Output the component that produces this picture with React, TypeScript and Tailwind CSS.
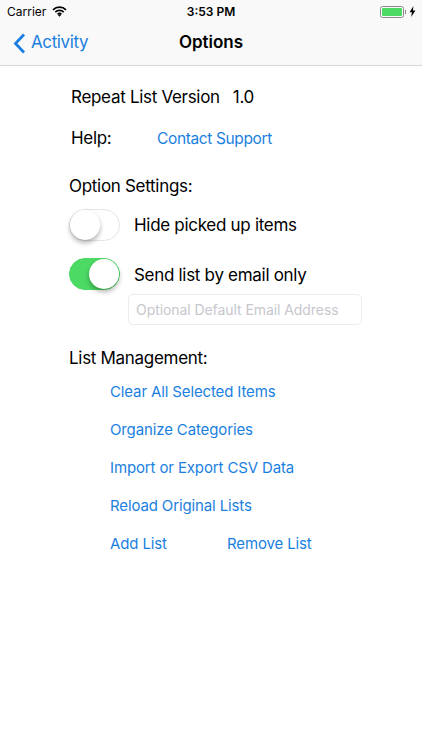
const blue = "text-[#1a7fe0]";

function Toggle({ on }: { on: boolean }) {
  return (
    <div
      className={`flex h-[32px] w-[51px] shrink-0 items-center rounded-full border ${
        on ? "justify-end border-[#4cd964] bg-[#4cd964]" : "justify-start border-[#e5e5e5] bg-white"
      }`}
    >
      <div className="h-[30px] w-[30px] rounded-full bg-white shadow-[0_3px_5px_rgba(0,0,0,0.3)]" />
    </div>
  );
}

function StatusBar() {
  return (
    <div className="relative flex h-[21px] items-center justify-between pl-[7px] pr-[6px] pt-[2px] text-[12px] text-black">
      <div className="flex items-center gap-[6px]">
        <span>Carrier</span>
        <svg width="15" height="11" viewBox="0 0 15 11" fill="none" stroke="#000" strokeWidth="1.7">
          <path d="M1 3.8a9.2 9.2 0 0 1 13 0" />
          <path d="M3.3 6.1a6 6 0 0 1 8.4 0" />
          <path d="M5.6 8.3a2.8 2.8 0 0 1 3.8 0" />
          <path d="M7.5 10.8 5.9 9.1a2.3 2.3 0 0 1 3.2 0z" fill="#000" stroke="none" />
        </svg>
      </div>
      <span className="absolute left-0 right-0 text-center font-semibold">3:53 PM</span>
      <div className="flex items-center gap-[3px]">
        <div className="flex items-center">
          <div className="h-[12px] w-[24px] rounded-[2.5px] border border-[#8a8a8a] p-[1px]">
            <div className="h-full w-full rounded-[1px] bg-[#4cd964]" />
          </div>
          <div className="ml-[1px] h-[4px] w-[1px] bg-[#8a8a8a]" />
        </div>
        <svg width="7" height="11" viewBox="0 0 7 11" fill="#000">
          <path d="M4.4 0 0.6 6.2h2.3L2.2 11 6.4 4.4H3.9z" />
        </svg>
      </div>
    </div>
  );
}

function NavBar() {
  return (
    <div className="relative flex h-[45px] items-center border-b border-[#d9d9d9] bg-[#f9f9f9]">
      <div className={`flex items-center gap-[5px] pl-[13px] text-[17px] tracking-[-0.4px] ${blue}`}>
        <svg width="13" height="21" viewBox="0 0 13 21" fill="none" stroke="#1a7fe0" strokeWidth="2.8">
          <path d="M11 1.5 2.5 10.5l8.5 9" />
        </svg>
        <span>Activity</span>
      </div>
      <div className="absolute left-0 right-0 text-center text-[17px] font-semibold text-black">Options</div>
    </div>
  );
}

export default function App() {
  return (
    <div
      className="h-[750px] w-[422px] overflow-hidden bg-white text-black"
      style={{ fontFamily: "Inter, 'Liberation Sans', sans-serif" }}
    >
      <div className="bg-[#f9f9f9]">
        <StatusBar />
        <NavBar />
      </div>

      <div className="flex flex-col pl-[69px] pt-[21px] text-[17px] tracking-[-0.3px]">
        <div className="ml-[2px] flex h-[22px] items-center gap-[13px]">
          <span>Repeat List Version</span>
          <span>1.0</span>
        </div>
        <div className="ml-[2px] mt-[19px] flex h-[22px] items-center">
          <span className="w-[86px]">Help:</span>
          <span className={`text-[15.5px] tracking-[-0.37px] ${blue}`}>Contact Support</span>
        </div>

        <div className="mt-[25px] h-[22px] leading-[22px]">Option Settings:</div>
        <div className="mt-[12px] flex items-center gap-[14px]">
          <Toggle on={false} />
          <span className="pt-[2px]">Hide picked up items</span>
        </div>
        <div className="mt-[17px] flex items-center gap-[14px]">
          <Toggle on={true} />
          <span className="pt-[4px]">Send list by email only</span>
        </div>
        <div className="ml-[59px] mt-[4px] flex h-[31px] w-[234px] items-center rounded-[5px] border border-[#ececec] px-[7px] text-[14px] tracking-[-0.07px] text-[#c7c7cd]">
          Optional Default Email Address
        </div>

        <div className="mt-[22px] h-[22px] leading-[22px]">List Management:</div>
        <div className={`ml-[41px] mt-[13px] flex flex-col gap-[18px] text-[15px] leading-[20px] tracking-[-0.13px] ${blue}`}>
          <span>Clear All Selected Items</span>
          <span>Organize Categories</span>
          <span>Import or Export CSV Data</span>
          <span>Reload Original Lists</span>
          <div className="flex">
            <span className="w-[117px]">Add List</span>
            <span>Remove List</span>
          </div>
        </div>
      </div>
    </div>
  );
}
